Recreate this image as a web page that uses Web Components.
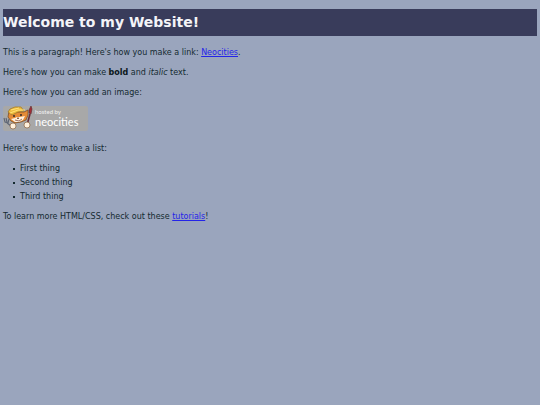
<!DOCTYPE html>
<html lang="en">
<head>
<meta charset="UTF-8">
<meta name="viewport" content="width=device-width, initial-scale=1.0">
<title>Welcome to my Website!</title>
<style>
    body {
        margin: 0;
        background-color: #9aa5bd;
        color: #142a30;
        font-family: "DejaVu Sans", Verdana, sans-serif;
        font-size: 8px;
        line-height: 14px;
    }
</style>
</head>
<body>
<home-page></home-page>

<template id="site-heading-template">
<style>
    :host {
        display: block;
        background-color: #393c5b;
        color: #f4f4f8;
    }

    h1 {
        margin: 0;
        font-size: 14px;
        line-height: 27px;
    }
</style>
<h1><slot></slot></h1>
</template>

<template id="neocities-badge-template">
<style>
    :host {
        display: block;
        width: fit-content;
    }

    svg {
        display: block;
        width: 85px;
        height: 26px;
    }

    .small {
        font: 6px Lato, sans-serif;
    }

    .name {
        font: 11px Lato, sans-serif;
    }
</style>
<svg viewBox="0 0 85 26" role="img" aria-label="Hosted by Neocities">
    <rect x="0" y="0" width="85" height="25" rx="2" fill="#a8a8a8"/>
    <!-- fork -->
    <path d="M1 12l1 4 3 1 1-4M3 12l1 4M4 17l4 3" fill="none" stroke="#5d6575" stroke-width="1.1"/>
    <!-- brush -->
    <path d="M24 19l3-11" stroke="#6b3038" stroke-width="1.6"/>
    <path d="M26 7l0-3 2-4 1 3-1 5z" fill="#a52b32" stroke="#5b2b32" stroke-width=".6"/>
    <!-- cat -->
    <path d="M6 5l-1 6 3 4 4 2 6-1 5-2 2-5 0-5-4 2-8 0z" fill="#e58b37" stroke="#70451f" stroke-width=".7"/>
    <path d="M8 13l4-1 2-1 3 0 5-1-2 4-4 2-4 0z" fill="#fff1df"/>
    <path d="M5 6l2-3 5-2 6 0 3 4-6 1-6 3z" fill="#efbd3e" stroke="#9b7426" stroke-width=".7"/>
    <path d="M8 4l8-2M7 7l8-3 7 0" fill="none" stroke="#ffe27b" stroke-width="1"/>
    <circle cx="11" cy="10" r="1" fill="#322b2b"/>
    <circle cx="18" cy="9" r="1" fill="#322b2b"/>
    <path d="M14 12l2 0-1 1zM12 14l4 1 3-2" fill="none" stroke="#743c2b" stroke-width=".7"/>
    <circle cx="10" cy="20" r="3" fill="#fff0dc" stroke="#88603d" stroke-width=".7"/>
    <circle cx="24" cy="19" r="3" fill="#fff0dc" stroke="#88603d" stroke-width=".7"/>
    <text class="small" x="32" y="8" fill="#f2f2f2">hosted by</text>
    <text class="name" x="32" y="20" fill="#ffffff">neocities</text>
</svg>
</template>

<template id="home-page-template">
<style>
    :host {
        display: flex;
        flex-direction: column;
        gap: 6px;
        padding: 9px 3px;
    }

    site-heading {
        margin-bottom: 4px;
    }

    neocities-badge {
        margin-bottom: 4px;
    }

    p, ul {
        margin: 0;
    }

    ul {
        padding: 0;
        list-style: none;
    }

    li {
        display: flex;
        align-items: center;
        gap: 5px;
        padding-left: 10px;
    }

    li::before {
        content: "";
        width: 2px;
        height: 2px;
        background-color: #142a30;
    }

    a {
        color: #2424e8;
    }

    b {
        color: #0b171b;
    }
</style>
<site-heading>Welcome to my Website!</site-heading>
<p>This is a paragraph! Here's how you make a link: <a href="https://neocities.org">Neocities</a>.</p>
<p>Here's how you can make <b>bold</b> and <i>italic</i> text.</p>
<p>Here's how you can add an image:</p>
<neocities-badge></neocities-badge>
<p>Here's how to make a list:</p>
<ul>
    <li>First thing</li>
    <li>Second thing</li>
    <li>Third thing</li>
</ul>
<p>To learn more HTML/CSS, check out these <a href="https://neocities.org/tutorials">tutorials</a>!</p>
</template>

<script>
class TemplateElement extends HTMLElement
{
    constructor(templateId)
    {
        super();

        const template = document.getElementById(templateId);
        this.attachShadow({mode: 'open'});
        this.shadowRoot.appendChild(template.content.cloneNode(true));
    }
}

class SiteHeading extends TemplateElement
{
    constructor()
    {
        super('site-heading-template');
    }
}

class NeocitiesBadge extends TemplateElement
{
    constructor()
    {
        super('neocities-badge-template');
    }
}

class HomePage extends TemplateElement
{
    constructor()
    {
        super('home-page-template');
    }
}

window.customElements.define('site-heading', SiteHeading);
window.customElements.define('neocities-badge', NeocitiesBadge);
window.customElements.define('home-page', HomePage);
</script>
</body>
</html>
